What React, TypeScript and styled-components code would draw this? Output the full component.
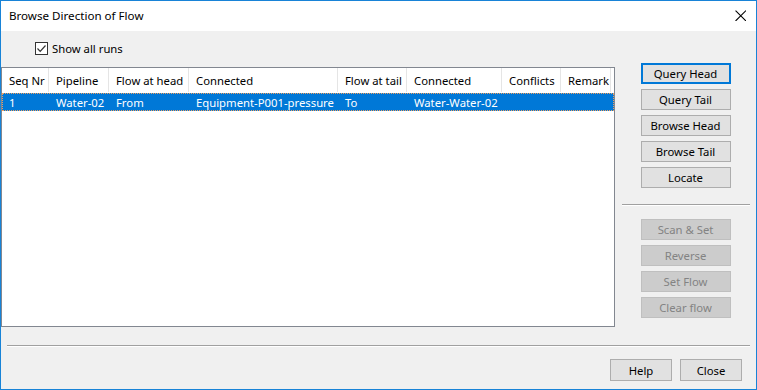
import styled, { createGlobalStyle } from "styled-components";

const GlobalStyle = createGlobalStyle`
  html, body {
    margin: 0;
    padding: 0;
    background: #ffffff;
  }
  body {
    font-family: "Segoe UI", "Noto Sans", "Liberation Sans", sans-serif;
    font-size: 11.3px;
    color: #000000;
  }
`;

interface Column {
  title: string;
  width: number;
}

const columns: Column[] = [
  { title: "Seq Nr", width: 47 },
  { title: "Pipeline", width: 60 },
  { title: "Flow at head", width: 80 },
  { title: "Connected", width: 149 },
  { title: "Flow at tail", width: 69 },
  { title: "Connected", width: 95 },
  { title: "Conflicts", width: 59 },
  { title: "Remark", width: 50 },
];

const rows: string[][] = [
  ["1", "Water-02", "From", "Equipment-P001-pressure", "To", "Water-Water-02", "", ""],
];

export default function App(): JSX.Element {
  return (
    <>
      <GlobalStyle />
      <Window>
        <TitleBar>
          <Title>Browse Direction of Flow</Title>
          <CloseGlyph viewBox="0 0 10 10" width="11" height="11">
            <path d="M0.5 0.5 L10 10 M10 0.5 L0.5 10" stroke="#000" strokeWidth="1" />
          </CloseGlyph>
        </TitleBar>
        <Body>
          <Main>
            <LeftPane>
              <CheckRow>
                <CheckBox>
                  <svg viewBox="0 0 11 11" width="11" height="11">
                    <path d="M1.5 5.5 L4.2 8.3 L9.5 2.5" fill="none" stroke="#333" strokeWidth="1.2" />
                  </svg>
                </CheckBox>
                <span>Show all runs</span>
              </CheckRow>
              <ListBox>
                <HeaderRow>
                  {columns.map((c, i) => (
                    <HeaderCell key={i} style={{ width: c.width }}>
                      {c.title}
                    </HeaderCell>
                  ))}
                </HeaderRow>
                {rows.map((r, ri) => (
                  <DataRow key={ri} $selected={ri === 0}>
                    {r.map((v, ci) => (
                      <DataCell key={ci} style={{ width: columns[ci].width }}>
                        {v}
                      </DataCell>
                    ))}
                  </DataRow>
                ))}
              </ListBox>
            </LeftPane>
            <RightPane>
              <ButtonStack>
                <Button $default>Query Head</Button>
                <Button>Query Tail</Button>
                <Button>Browse Head</Button>
                <Button>Browse Tail</Button>
                <Button>Locate</Button>
              </ButtonStack>
              <SideSeparator />
              <ButtonStack>
                <Button disabled>Scan &amp; Set</Button>
                <Button disabled>Reverse</Button>
                <Button disabled>Set Flow</Button>
                <Button disabled>Clear flow</Button>
              </ButtonStack>
            </RightPane>
          </Main>
          <Footer>
            <Separator />
            <FooterButtons>
              <FooterButton>Help</FooterButton>
              <FooterButton>Close</FooterButton>
            </FooterButtons>
          </Footer>
        </Body>
      </Window>
    </>
  );
}

const Window = styled.div`
  width: 757px;
  height: 390px;
  box-sizing: border-box;
  border: 1px solid #1883d7;
  display: flex;
  flex-direction: column;
  background: #f0f0f0;
`;

const TitleBar = styled.div`
  height: 30px;
  background: #ffffff;
  display: flex;
  align-items: center;
  justify-content: space-between;
  padding: 0 10px 0 8px;
`;

const Title = styled.div`
  font-size: 11.6px;
  margin-top: -1px;
`;

const CloseGlyph = styled.svg`
  display: block;
  margin-top: -1px;
`;

const Body = styled.div`
  flex: 1;
  display: flex;
  flex-direction: column;
`;

const Main = styled.div`
  display: grid;
  grid-template-columns: 614px 1fr;
`;

const LeftPane = styled.div`
  display: flex;
  flex-direction: column;
  padding-top: 11px;
`;

const CheckRow = styled.label`
  display: flex;
  align-items: center;
  gap: 4px;
  height: 13px;
  padding-left: 34px;
  margin-bottom: 12px;
`;

const CheckBox = styled.span`
  width: 13px;
  height: 13px;
  box-sizing: border-box;
  border: 1px solid #333333;
  background: #ffffff;
  display: flex;
  align-items: center;
  justify-content: center;
`;

const ListBox = styled.div`
  height: 260px;
  box-sizing: border-box;
  border: 1px solid #828790;
  background: #ffffff;
  overflow: hidden;
`;

const HeaderRow = styled.div`
  display: flex;
  height: 24px;
  margin-bottom: 1px;
`;

const HeaderCell = styled.div`
  box-sizing: border-box;
  padding-left: 7px;
  border-right: 1px solid #e5e5e5;
  display: flex;
  align-items: center;
  white-space: nowrap;
  overflow: hidden;
  flex-shrink: 0;
`;

const DataRow = styled.div<{ $selected?: boolean }>`
  display: flex;
  height: 18px;
  box-sizing: border-box;
  background: ${(p) => (p.$selected ? "#0078d7" : "transparent")};
  color: ${(p) => (p.$selected ? "#ffffff" : "#000000")};
  outline: ${(p) => (p.$selected ? "1px dotted #f0a060" : "none")};
  outline-offset: -1px;
  width: 612px;
`;

const DataCell = styled.div`
  box-sizing: border-box;
  padding-left: 7px;
  display: flex;
  align-items: center;
  white-space: nowrap;
  overflow: hidden;
  flex-shrink: 0;
`;

const RightPane = styled.div`
  display: flex;
  flex-direction: column;
  padding-top: 32px;
  padding-left: 7px;
  padding-right: 6px;
`;

const ButtonStack = styled.div`
  display: flex;
  flex-direction: column;
  align-items: center;
  gap: 5px;
  padding-right: 1px;
`;

const Button = styled.button<{ $default?: boolean }>`
  width: 90px;
  height: 21px;
  box-sizing: border-box;
  margin: 0;
  padding: 0;
  font-family: inherit;
  font-size: 11.3px;
  color: #000000;
  background: #e1e1e1;
  border: ${(p) => (p.$default ? "2px solid #0078d7" : "1px solid #adadad")};

  &:disabled {
    background: #cccccc;
    border-color: #bfbfbf;
    color: #838383;
  }
`;

const SideSeparator = styled.div`
  height: 0;
  border-top: 1px solid #a0a0a0;
  border-bottom: 1px solid #ffffff;
  margin: 16px 0 13px;
`;

const Footer = styled.div`
  display: flex;
  flex-direction: column;
  padding: 18px 14px 0 6px;
`;

const Separator = styled.div`
  height: 0;
  border-top: 1px solid #a0a0a0;
  border-bottom: 1px solid #ffffff;
  margin-right: -8px;
`;

const FooterButtons = styled.div`
  display: flex;
  justify-content: flex-end;
  gap: 8px;
  margin-top: 12px;
`;

const FooterButton = styled(Button)`
  width: 62px;
  height: 22px;
`;
